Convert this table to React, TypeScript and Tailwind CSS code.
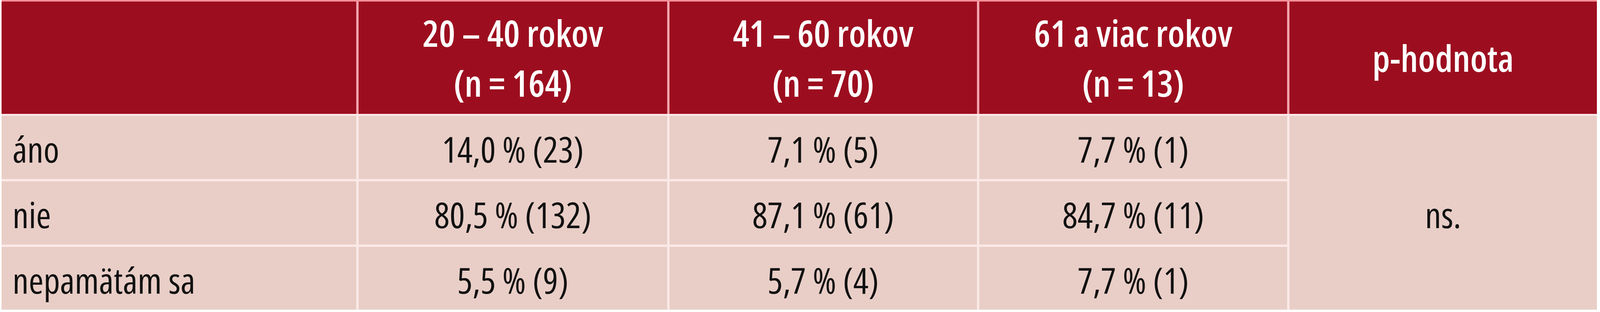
import React from "react";

const headers = [
  ["", ""],
  ["20 – 40 rokov", "(n = 164)"],
  ["41 – 60 rokov", "(n = 70)"],
  ["61 a viac rokov", "(n = 13)"],
];

const rows = [
  ["áno", "14,0 % (23)", "7,1 % (5)", "7,7 % (1)"],
  ["nie", "80,5 % (132)", "87,1 % (61)", "84,7 % (11)"],
  ["nepamätám sa", "5,5 % (9)", "5,7 % (4)", "7,7 % (1)"],
];

export default function App() {
  return (
    <div
      className="w-full h-[800px] bg-white font-stretch-[75%]"
      style={{ fontFamily: '"Open Sans", "Liberation Sans", sans-serif' }}
    >
      <div className="ml-[0.09vw] mr-[0.2vw] flex flex-col">
        <div className="h-[4px] bg-[#f48f99]" />
        <div className="grid grid-cols-[1224fr_1063fr_1061fr_1061fr_1060fr] gap-x-[0.145vw] bg-[#f2a3ab] h-[288px]">
          {headers.map((h, i) => (
            <div
              key={i}
              className="bg-[#9c0e1f] flex flex-col items-center justify-center text-white font-semibold text-[94px] leading-[128px]"
            >
              {h[0] && <div>{h[0]}</div>}
              {h[1] && <div>{h[1]}</div>}
            </div>
          ))}
          <div className="bg-[#9c0e1f] flex items-center justify-center text-white font-semibold text-[94px] leading-[128px]">
            p-hodnota
          </div>
        </div>
        <div className="h-[5px] bg-[#fbe8e6]" />
        <div className="grid grid-cols-[1224fr_1063fr_1061fr_1061fr_1060fr] grid-rows-[162px_162px_161px] gap-x-[0.145vw] gap-y-[6px] bg-[#fbe9e7] text-[92px] text-[#111111]">
          {rows.map((r, ri) => (
            <React.Fragment key={ri}>
              <div className="bg-[#e9cec7] flex items-center pl-[0.69vw] pt-[8px]">
                {r[0]}
              </div>
              {r.slice(1).map((c, ci) => (
                <div
                  key={ci}
                  className="bg-[#e9cec7] flex items-center justify-center pt-[8px]"
                >
                  {c}
                </div>
              ))}
              {ri === 0 && (
                <div className="row-span-3 col-start-5 row-start-1 bg-[#e9cec7] flex items-center justify-center pt-[8px]">
                  ns.
                </div>
              )}
            </React.Fragment>
          ))}
        </div>
      </div>
    </div>
  );
}
